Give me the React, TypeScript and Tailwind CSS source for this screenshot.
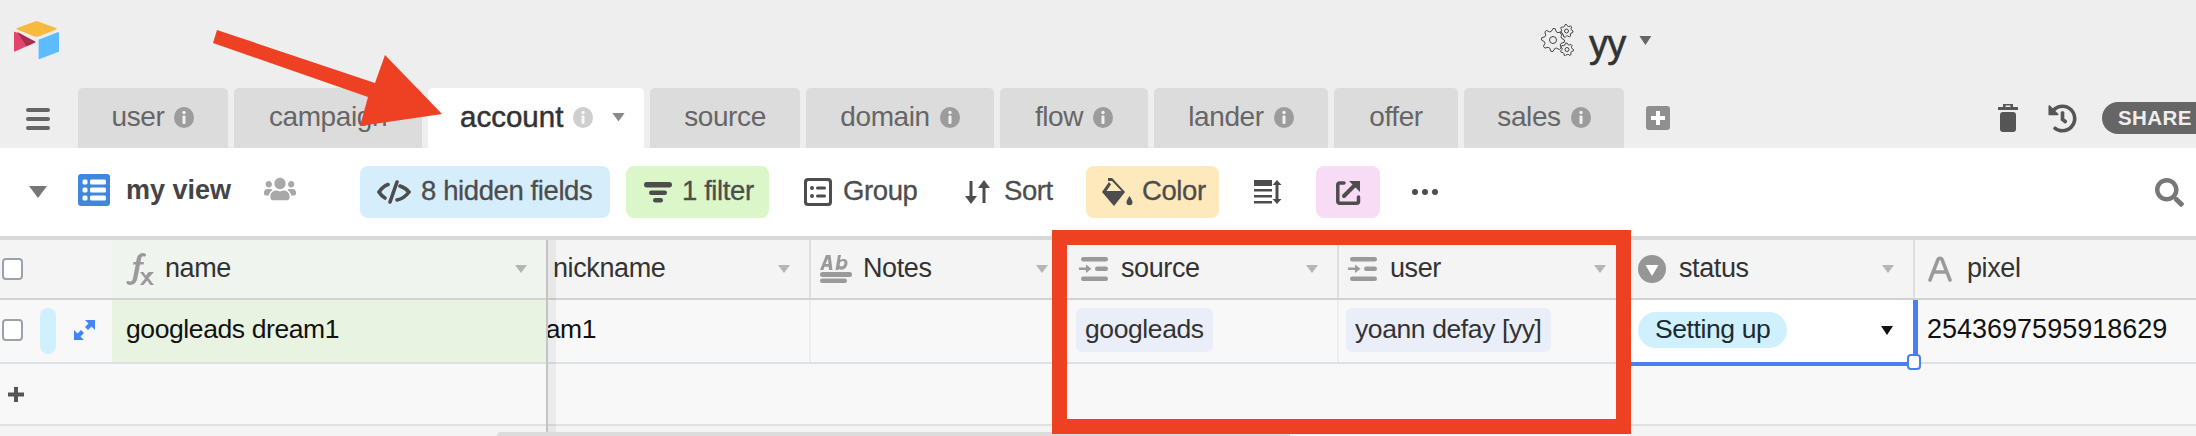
import { ReactNode } from "react";
import { FaHistory, FaSearch, FaUsers } from "react-icons/fa";

type Tab = { label: string; width: number; info?: boolean };

const tabs: Tab[] = [
  { label: "user", width: 150, info: true },
  { label: "campaign", width: 188 },
  { label: "account", width: 216 },
  { label: "source", width: 150 },
  { label: "domain", width: 188, info: true },
  { label: "flow", width: 148, info: true },
  { label: "lander", width: 174, info: true },
  { label: "offer", width: 124 },
  { label: "sales", width: 160, info: true },
];

function gearPath(cx: number, cy: number, r: number, teeth: number) {
  const points: string[] = [];
  const step = (Math.PI * 2) / (teeth * 4);
  for (let i = 0; i < teeth * 4; i++) {
    const radius = i % 4 < 2 ? r : r * 0.76;
    const x = cx + Math.cos(i * step) * radius;
    const y = cy + Math.sin(i * step) * radius;
    points.push(`${i === 0 ? "M" : "L"}${x.toFixed(2)} ${y.toFixed(2)}`);
  }
  return points.join(" ") + " Z";
}

function Gears() {
  return (
    <svg width="33" height="32" viewBox="0 0 33 32" fill="none" stroke="#444" strokeWidth="1">
      <path d={gearPath(12, 16, 11.5, 8)} />
      <circle cx="12" cy="16" r="3.5" />
      <path d={gearPath(25.5, 7, 6.5, 7)} />
      <circle cx="25.5" cy="7" r="2" />
      <path d={gearPath(26, 25.5, 6.5, 7)} />
      <circle cx="26" cy="25.5" r="2" />
    </svg>
  );
}

function Logo() {
  return (
    <svg width="45" height="38" viewBox="0 0 45 38">
      <path d="M21 .6c1-.4 2.200-.4 3.200 0L42 7c.8.300.8 1 0 1.400L24.400 15.400c-1.200.5-2.600.5-3.800 0L3 8.400C2.200 8 2.200 7.300 3 7z" fill="#f7b93e" />
      <path d="M25 18.500 43.600 11.300c.7-.3 1.400.2 1.400 1V30c0 .5-.3.900-.8 1.100L25.600 38c-.6.200-1-.1-1-.8V19.300c0-.4.100-.6.400-.8z" fill="#5cbcff" />
      <path d="M0 11.500c0-.6.500-.9 1-.7L21 20.400c.5.300.5.700 0 1L1 30.600c-.5.200-1-.1-1-.7z" fill="#e2446c" />
      <path d="M3 10.800 21 20.400c.5.300.5.700 0 1l-8.500 3.900z" fill="#a92d4c" />
    </svg>
  );
}

function InfoIcon({ color = "#9c9c9c" }: { color?: string }) {
  return (
    <svg width="20" height="21" viewBox="0 0 20 21">
      <ellipse cx="10" cy="10.500" rx="10" ry="10.500" fill={color} />
      <circle cx="10" cy="5.500" r="1.700" fill="#fff" opacity="0.85" />
      <rect x="8.500" y="8.500" width="3" height="8.500" rx="1" fill="#fff" opacity="0.85" />
    </svg>
  );
}

function Caret({ className }: { className: string }) {
  return <div className={`[clip-path:polygon(0_0,100%_0,50%_100%)] ${className}`} />;
}

function TabItem({ tab }: { tab: Tab }) {
  const active = tab.label === "account";
  if (active) {
    return (
      <div
        style={{ width: tab.width }}
        className="flex h-[60px] shrink-0 items-center rounded-t-[5px] bg-white pl-[32px] pb-[2px] text-[29.500px] text-[#333] [-webkit-text-stroke:0.5px_#333]"
      >
        <span className="w-[113px]">{tab.label}</span>
        <InfoIcon color="#cfcfcf" />
        <Caret className="ml-[19px] h-[9px] w-[13px] bg-[#8a8a8a]" />
      </div>
    );
  }
  return (
    <div
      style={{ width: tab.width }}
      className="flex h-[60px] shrink-0 items-center justify-center gap-[10px] rounded-t-[5px] bg-[#dcdcdc] pb-[2px] text-[28px] tracking-[-0.4px] text-[#666]"
    >
      <span>{tab.label}</span>
      {tab.info && <InfoIcon />}
    </div>
  );
}

function ToolLabel({ width, children }: { width: number; children: ReactNode }) {
  return (
    <span
      style={{ width }}
      className="whitespace-nowrap pb-[3px] text-[27.500px] tracking-[-0.4px] text-[#4d4d4d] [-webkit-text-stroke:0.3px_#4d4d4d]"
    >
      {children}
    </span>
  );
}

function HiddenIcon() {
  return (
    <svg width="34" height="24" viewBox="0 0 34 24" fill="none" stroke="#4d4d4d" strokeWidth="3.600" strokeLinecap="round">
      <path d="M11 4.500C7 6 4 9 2 12c1.500 2.500 3.500 4.500 6 6" />
      <path d="M23 6c4 1.500 7 3.500 9 6-3 4-7 7-12 8" />
      <path d="M20 2 13 22" />
    </svg>
  );
}

function FilterIcon() {
  return (
    <svg width="28" height="21" viewBox="0 0 28 21" fill="#4d4d4d">
      <rect width="28" height="5.500" rx="2.700" />
      <rect x="5" y="8.500" width="18" height="4.500" rx="2.200" />
      <rect x="9" y="16" width="10" height="4.500" rx="2.200" />
    </svg>
  );
}

function GroupIcon() {
  return (
    <svg width="28" height="28" viewBox="0 0 28 28">
      <rect width="28" height="28" rx="4" fill="#4d4d4d" />
      <rect x="3" y="3" width="22" height="22" rx="1.500" fill="#fff" />
      <circle cx="8" cy="10" r="2" fill="#4d4d4d" />
      <circle cx="8" cy="18" r="2" fill="#4d4d4d" />
      <rect x="12" y="8.500" width="10" height="3" rx="1.500" fill="#4d4d4d" />
      <rect x="12" y="16.500" width="10" height="3" rx="1.500" fill="#4d4d4d" />
    </svg>
  );
}

function SortIcon() {
  return (
    <svg width="25" height="24" viewBox="0 0 25 24" fill="#4d4d4d">
      <path d="M4.500 1h3v15H12l-6 8-6-8h4.500z" />
      <path d="M17.500 23h3V8H25l-6-8-6 8h4.500z" />
    </svg>
  );
}

function BucketIcon() {
  return (
    <svg width="31" height="28" viewBox="0 0 31 28">
      <path d="M6 0h4l2 2 11 12-11 14L0 14 7 4l2 2.500L4.500 13h15L10 3H6z" fill="#4d4d4d" />
      <path d="M1 13.500h21.500L12 27.500z" fill="#4d4d4d" />
      <path d="M27.500 18c1.200 2.200 3 4.200 3 6.300a3 3 0 0 1-6 0c0-2.100 1.800-4.100 3-6.300z" fill="#4d4d4d" />
    </svg>
  );
}

function RowHeightIcon() {
  return (
    <svg width="28" height="24" viewBox="0 0 28 24" fill="#4d4d4d">
      <rect width="18" height="6" />
      <rect y="9" width="18" height="2.500" />
      <rect y="15" width="18" height="2.500" />
      <rect y="21" width="18" height="2.500" />
      <path d="M23 0l4.500 5h-3v14h3L23 24l-4.500-5h3V5h-3z" />
    </svg>
  );
}

function ShareViewIcon() {
  return (
    <svg width="25" height="25" viewBox="0 0 25 25" fill="none" stroke="#4d4d4d" strokeWidth="3.500" strokeLinecap="round">
      <path d="M8 3H3.500A1.700 1.700 0 0 0 1.800 4.700v16.800a1.700 1.700 0 0 0 1.700 1.700h17.300a1.700 1.700 0 0 0 1.700-1.700V17" />
      <path d="M8 16 19 5" strokeWidth="4" />
      <path d="M13 1h11v11z" fill="#4d4d4d" stroke="none" />
    </svg>
  );
}

function HeaderCell({
  width,
  icon,
  label,
  pl,
  pr = 19,
  gap = 13,
  divider,
}: {
  width: number;
  icon?: ReactNode;
  label: string;
  pl: number;
  pr?: number;
  gap?: number;
  divider?: boolean;
}) {
  return (
    <div
      style={{ width, paddingLeft: pl, paddingRight: pr, gap }}
      className={`flex h-[58px] shrink-0 items-center text-[27px] tracking-[-0.4px] text-[#333] ${divider ? "border-l-2 border-[#dedede]" : ""}`}
    >
      {icon}
      <span className="whitespace-nowrap pb-[2px]">{label}</span>
      <Caret className="ml-auto h-[8px] w-[12px] bg-[#b5b5b5]" />
    </div>
  );
}

function LinkIcon() {
  return (
    <svg width="29" height="24" viewBox="0 0 29 24" fill="#9a9a9a">
      <rect x="2" width="27" height="4.500" rx="2.200" />
      <rect x="16" y="9.500" width="13" height="4.500" rx="2.200" />
      <rect x="2" y="19.500" width="27" height="4.500" rx="2.200" />
      <path d="M0 10.500h7V7.500l5.500 4.200L7 16v-3H0z" />
    </svg>
  );
}

function FormulaIcon() {
  return (
    <svg width="29" height="32" viewBox="0 0 29 32" fill="#9a9a9a">
      <path d="M18 0c2 0 3 .8 3 2s-1 1.700-2 1.400c-1.500-.5-2.600 0-3 2.600l-.5 3H19l-.5 2.500h-3.500l-2.500 13c-.8 4.500-3 7.500-7.500 7.500C3 32 1.500 31 1.500 29.600S3 27.800 4 28.300c2 .8 3.300.2 4-3l2.700-13.800H8L8.500 9H11l.7-3C12.500 2 15 0 18 0z" />
      <path d="M15 19h3.500l2.300 3.700L23.500 19H29l-5.500 6 5.500 7h-3.800l-3-4.500L18.500 32H15l5-6.500z" />
    </svg>
  );
}

function TextIcon() {
  return (
    <svg width="32" height="28" viewBox="0 0 32 28" fill="#9a9a9a">
      <rect y="17" width="32" height="5" rx="2.500" />
      <rect y="23.500" width="27" height="4.500" rx="2.200" />
      <path d="M0 15 6 0h4.500l2 15H9l-.3-3.300H4.500L3.300 15zM5.500 9h3L8 3.500z" />
      <path d="M18 0h3l-1 5c2.800-2 8-1.500 7.500 3.500-.5 5-5 7.500-8.500 5.500l-.7 1H15.500zM19.500 10.500c2 1.800 4.700.8 5-2.300.2-2.600-2.500-2.800-4.300-1z" />
    </svg>
  );
}

function SelectIcon() {
  return (
    <svg width="28" height="28" viewBox="0 0 28 28">
      <circle cx="14" cy="14" r="14" fill="#969696" />
      <path d="M7.500 10h13L14 21z" fill="#fff" />
    </svg>
  );
}

function CheckBox() {
  return <div className="h-[22px] w-[21px] shrink-0 rounded-[4px] border-2 border-[#9aa3ab] bg-white" />;
}

function Chip({ children }: { children: ReactNode }) {
  return (
    <span className="flex h-[44px] items-center rounded-[6px] bg-[#e9eef9] px-[9px] text-[26.500px] tracking-[-0.4px] whitespace-nowrap text-[#333]">
      {children}
    </span>
  );
}

export default function App() {
  return (
    <div className="relative h-[436px] w-[2196px] overflow-hidden bg-[#eeeeee] font-['Liberation_Sans',Arial,sans-serif]">
      <div className="flex h-[88px]">
        <div className="ml-[14px] mt-[21px]">
          <Logo />
        </div>
        <div className="ml-[1482px] mt-[24px] flex items-start">
          <Gears />
          <span className="ml-[15px] mt-[2px] text-[38px] leading-[36px] tracking-[-0.8px] text-[#333] [-webkit-text-stroke:0.6px_#333]">yy</span>
          <Caret className="ml-[14px] mt-[12px] h-[9px] w-[12px] bg-[#666]" />
        </div>
      </div>

      <div className="flex h-[60px]">
        <div className="flex w-[78px] shrink-0 flex-col gap-[5px] pl-[26px] pt-[20px]">
          <div className="h-[4px] w-[24px] rounded-full bg-[#666]" />
          <div className="h-[4px] w-[24px] rounded-full bg-[#666]" />
          <div className="h-[4px] w-[24px] rounded-full bg-[#666]" />
        </div>
        <div className="flex shrink-0 gap-[6px]">
          {tabs.map((tab) => (
            <TabItem key={tab.label} tab={tab} />
          ))}
        </div>
        <div className="ml-[22px] mt-[18px] flex h-[24px] w-[24px] shrink-0 items-center justify-center rounded-[3px] bg-[#8f8f8f]">
          <svg width="14" height="14" viewBox="0 0 14 14" fill="#fff">
            <rect x="5" width="4" height="14" />
            <rect y="5" width="14" height="4" />
          </svg>
        </div>
        <div className="ml-[328px] mt-[16px] shrink-0">
          <svg width="20" height="28" viewBox="0 0 20 28" fill="#555">
            <path d="M5 0h10v3h5v3H0V3h5zM7.500 1.500V3h5V1.500z" />
            <rect x="2" y="8" width="16" height="20" rx="3" />
          </svg>
        </div>
        <div className="ml-[30px] mt-[16px] shrink-0">
          <FaHistory size={29} color="#555" />
        </div>
        <div className="ml-[25px] mt-[14px] flex h-[32px] w-[120px] shrink-0 items-center rounded-l-full bg-[#666] pl-[16px] text-[20.500px] font-bold tracking-[0.4px] text-[#eee]">
          SHARE
        </div>
      </div>

      <div className="flex h-[88px] items-center bg-white">
        <Caret className="ml-[29px] h-[12px] w-[18px] bg-[#777]" />
        <div className="ml-[31px] mb-[4px]">
          <svg width="32" height="32" viewBox="0 0 32 32">
            <rect width="32" height="32" rx="3" fill="#3f86dd" />
            <rect x="4.500" y="5.500" width="5" height="5" rx="1.500" fill="#fff" />
            <rect x="12" y="5.500" width="16" height="5" rx="1.500" fill="#fff" />
            <rect x="4.500" y="13.500" width="5" height="5" rx="1.500" fill="#fff" />
            <rect x="12" y="13.500" width="16" height="5" rx="1.500" fill="#fff" />
            <rect x="4.500" y="21.500" width="5" height="5" rx="1.500" fill="#fff" />
            <rect x="12" y="21.500" width="16" height="5" rx="1.500" fill="#fff" />
          </svg>
        </div>
        <span className="ml-[16px] w-[106px] whitespace-nowrap pb-[3px] text-[27px] font-bold text-[#444]">my view</span>
        <div className="ml-[32px] mb-[6px]">
          <FaUsers size={32} color="#a8a8a8" />
        </div>
        <div className="ml-[64px] flex h-[52px] w-[250px] items-center gap-[10px] rounded-lg bg-[#d6eefb] pl-[17px]">
          <HiddenIcon />
          <ToolLabel width={172}>8 hidden fields</ToolLabel>
        </div>
        <div className="ml-[16px] flex h-[52px] w-[143px] items-center gap-[10px] rounded-lg bg-[#dbf6c9] pl-[18px]">
          <FilterIcon />
          <ToolLabel width={72}>1 filter</ToolLabel>
        </div>
        <div className="ml-[35px]">
          <GroupIcon />
        </div>
        <div className="ml-[11px] flex">
          <ToolLabel width={71}>Group</ToolLabel>
        </div>
        <div className="ml-[51px]">
          <SortIcon />
        </div>
        <div className="ml-[14px] flex">
          <ToolLabel width={49}>Sort</ToolLabel>
        </div>
        <div className="ml-[33px] flex h-[52px] w-[133px] items-center gap-[9px] rounded-lg bg-[#fde9bb] pl-[16px]">
          <BucketIcon />
          <ToolLabel width={63}>Color</ToolLabel>
        </div>
        <div className="ml-[35px]">
          <RowHeightIcon />
        </div>
        <div className="ml-[34px] flex h-[52px] w-[64px] items-center justify-center rounded-lg bg-[#f8dcf5]">
          <ShareViewIcon />
        </div>
        <div className="ml-[32px] flex gap-[4px]">
          <div className="h-[6px] w-[6px] rounded-full bg-[#4d4d4d]" />
          <div className="h-[6px] w-[6px] rounded-full bg-[#4d4d4d]" />
          <div className="h-[6px] w-[6px] rounded-full bg-[#4d4d4d]" />
        </div>
        <div className="ml-auto mr-[12px]">
          <FaSearch size={29} color="#777" />
        </div>
      </div>

      <div className="relative h-[200px] bg-[#f4f4f4]">
        <div className="h-[4px] bg-[#d8d8d8]" />

        <div className="flex h-[58px] items-stretch">
          <div className="flex w-[112px] shrink-0 items-center pl-[2px]">
            <CheckBox />
          </div>
          <div className="flex w-[434px] shrink-0 items-center bg-[#eff4ee] pl-[13px] pr-[19px] text-[27px] tracking-[-0.4px] text-[#333]">
            <FormulaIcon />
            <span className="ml-[11px] pb-[2px]">name</span>
            <Caret className="ml-auto h-[8px] w-[12px] bg-[#b5b5b5]" />
          </div>
          <div className="w-[2px] shrink-0 bg-[#c4c4c4]" />
          <HeaderCell width={261} label="nickname" pl={5} />
          <HeaderCell width={253} label="Notes" pl={9} gap={11} pr={14} divider icon={<TextIcon />} />
          <HeaderCell width={275} label="source" pl={17} icon={<LinkIcon />} />
          <HeaderCell width={287} label="user" pl={9} pr={18} divider icon={<LinkIcon />} />
          <HeaderCell width={289} label="status" pl={14} icon={<SelectIcon />} />
          <div className="flex h-[58px] w-[283px] shrink-0 items-center gap-[15px] border-l-2 border-[#d9dfe3] pl-[13px] text-[27px] tracking-[-0.4px] text-[#333]">
            <svg width="24" height="26" viewBox="0 0 24 26" fill="none" stroke="#9a9a9a" strokeWidth="3.500" strokeLinecap="round" strokeLinejoin="round">
              <path d="M2 24 10 3.500c.7-1.700 3.300-1.700 4 0L22 24M6 16h12" />
            </svg>
            <span className="pb-[2px]">pixel</span>
          </div>
        </div>
        <div className="h-[2px] bg-[#d2d2d2]" />

        <div className="flex h-[62px] items-stretch bg-[#f8f8f8] text-[26.500px] tracking-[-0.4px] text-[#111]">
          <div className="flex w-[112px] shrink-0 items-center pl-[2px] pb-[2px]">
            <CheckBox />
            <div className="ml-[17px] mt-[2px] h-[46px] w-[16px] rounded-full bg-[#d0f0fd]" />
            <svg className="ml-[18px]" width="21" height="20" viewBox="0 0 21 20" fill="#4285f4">
              <path d="M11 0h10v10l-3.500-3.500-3.500 3.500-3-3 3.500-3.500zM0 10l3.500 3.500L7 10l3 3-3.500 3.500L10 20H0z" />
            </svg>
          </div>
          <div className="flex w-[434px] shrink-0 items-center bg-[#e8f3e2] pb-[3px] pl-[14px]">googleads dream1</div>
          <div className="w-[2px] shrink-0 bg-[#c4c4c4]" />
          <div className="flex w-[261px] shrink-0 items-center overflow-hidden pb-[3px]">
            <span className="ml-[-165px] whitespace-nowrap">googleads dream1</span>
          </div>
          <div className="w-[253px] shrink-0 border-l-2 border-[#eeeeee]" />
          <div className="flex w-[275px] shrink-0 items-center pb-[2px] pl-[14px]">
            <Chip>googleads</Chip>
          </div>
          <div className="flex w-[287px] shrink-0 items-center border-l-2 border-[#eeeeee] pb-[2px] pl-[7px]">
            <Chip>yoann defay [yy]</Chip>
          </div>
          <div className="relative flex w-[289px] shrink-0 items-center bg-white pb-[2px] pl-[14px]">
            <span className="flex h-[36px] items-center rounded-full bg-[#d0f0fd] px-[17px] whitespace-nowrap text-[#1a2a33]">
              Setting up
            </span>
            <Caret className="absolute left-[257px] top-[26px] h-[9px] w-[12px] bg-[#111]" />
            <div className="absolute -bottom-[4px] right-[-5px] left-0 top-0 border-r-[5px] border-b-4 border-[#4a80ee]" />
            <div className="absolute -bottom-[8px] right-[-8px] h-[16px] w-[14px] rounded-[4px] border-2 border-[#4a80ee] bg-white" />
          </div>
          <div className="flex w-[283px] shrink-0 items-center pb-[3px] pl-[14px] text-[27px] tracking-normal">2543697595918629</div>
        </div>
        <div className="h-[2px] bg-[#dde1e5]" />

        <div className="flex h-[60px] items-center bg-[#f8f8f8] pl-[8px]">
          <svg width="16" height="15" viewBox="0 0 16 15" fill="#555">
            <rect x="6" width="4" height="15" />
            <rect y="5.500" width="16" height="4" />
          </svg>
        </div>
        <div className="h-[2px] bg-[#dfe1e3]" />

        <div className="absolute bottom-0 left-[546px] top-[4px] w-[2px] bg-[#c4c4c4]" />
        <div className="absolute bottom-0 left-[548px] top-[4px] w-[8px] bg-black/5" />
        <div className="absolute bottom-0 left-[497px] h-[4px] w-[793px] rounded-tl-full bg-[#dcdcdc]" />
      </div>

      <svg className="absolute left-[205px] top-[25px]" width="245" height="108" viewBox="205 25 245 108" fill="#ee4023">
        <polygon points="217,30 213,43 368,97 360,126 442,114 385,55 375,83" />
      </svg>
      <div className="absolute left-[1052px] top-[230px] h-[204px] w-[579px] border-[15px] border-[#ee4023]" />
    </div>
  );
}
